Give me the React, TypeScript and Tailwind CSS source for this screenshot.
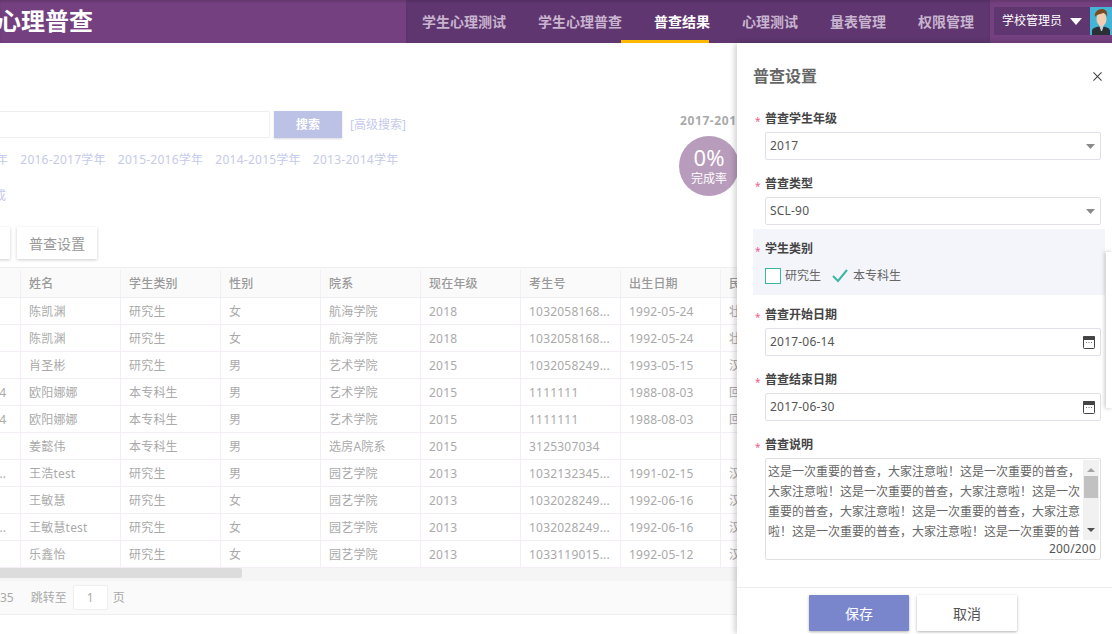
import type { ReactNode } from 'react';

const navItems = ['学生心理测试', '学生心理普查', '普查结果', '心理测试', '量表管理', '权限管理'];
const years = ['2016-2017学年', '2015-2016学年', '2014-2015学年', '2013-2014学年'];
const headers = ['', '姓名', '学生类别', '性别', '院系', '现在年级', '考生号', '出生日期', '民族'];
const rows = [
  ['', '陈凯渊', '研究生', '女', '航海学院', '2018', '1032058168...', '1992-05-24', '壮'],
  ['', '陈凯渊', '研究生', '女', '航海学院', '2018', '1032058168...', '1992-05-24', '壮'],
  ['', '肖圣彬', '研究生', '男', '艺术学院', '2015', '1032058249...', '1993-05-15', '汉'],
  ['4', '欧阳娜娜', '本专科生', '男', '艺术学院', '2015', '1111111', '1988-08-03', '回'],
  ['4', '欧阳娜娜', '本专科生', '男', '艺术学院', '2015', '1111111', '1988-08-03', '回'],
  ['', '姜懿伟', '本专科生', '男', '选房A院系', '2015', '3125307034', '', ''],
  ['...', '王浩test', '研究生', '男', '园艺学院', '2013', '1032132345...', '1991-02-15', '汉'],
  ['', '王敏慧', '研究生', '女', '园艺学院', '2013', '1032028249...', '1992-06-16', '汉'],
  ['...', '王敏慧test', '研究生', '女', '园艺学院', '2013', '1032028249...', '1992-06-16', '汉'],
  ['', '乐鑫怡', '研究生', '女', '园艺学院', '2013', '1033119015...', '1992-05-12', '汉'],
];
const notice = '这是一次重要的普查，大家注意啦！'.repeat(7);

function Avatar() {
  return (
    <svg viewBox="0 0 22 28" className="h-[28px] w-[22px] shrink-0">
      <rect width="22" height="28" fill="#42b4d8" />
      <path d="M2 28v-4c0-3 4-4 9-5 5 1 9 2 9 5v4z" fill="#2b3036" />
      <path d="M9 18h5l-2 6h-1z" fill="#c9ccd0" />
      <ellipse cx="11.5" cy="12" rx="5" ry="7" fill="#f2cdb0" />
      <path d="M5 10c-1-5 3-8 7-8 3 0 6 2 5 8-1-3-2-4-4-4-2 1-6 1-8 4z" fill="#7a4a22" />
    </svg>
  );
}

function Caret() {
  return (
    <svg viewBox="0 0 9 5" className="h-[5px] w-[9px]">
      <path d="M0 0h9L4.5 5z" fill="#8a8a8a" />
    </svg>
  );
}

function CalendarIcon() {
  return (
    <svg viewBox="0 0 12 13" className="h-[13px] w-[12px]">
      <rect x=".5" y=".5" width="11" height="12" rx="1" fill="#fff" stroke="#444" />
      <rect x="0" y="0" width="12" height="4" rx="1" fill="#444" />
      <path d="M3 6.5h1M5.5 6.5h1M8 6.5h1" stroke="#777" />
    </svg>
  );
}

function Field({ label, children }: { label: string; children: ReactNode }) {
  return (
    <div className="flex flex-col">
      <div className="flex h-[18px] items-center">
        <span className="w-[12px] pl-[2px] pt-[3px] text-[10px] leading-none text-[#ec5f8c]">*</span>
        <span className="text-[12px] font-bold text-[#444]">{label}</span>
      </div>
      {children}
    </div>
  );
}

function InputBox({ value, icon }: { value: string; icon: ReactNode }) {
  return (
    <div className="ml-[12px] mt-[4px] flex h-[28px] w-[336px] items-center justify-between rounded-[2px] border border-[#e3dfe8] bg-white pl-[4px] pr-[5px] text-[12px] tracking-[0.2px] text-[#555]">
      <span>{value}</span>
      {icon}
    </div>
  );
}

function DataTable() {
  return (
    <div className="h-[301px] w-[920px] overflow-hidden border-t border-[#f0eef2]">
      {[headers, ...rows].map((row, i) => (
        <div
          key={i}
          className={
            i === 0
              ? 'flex h-[30px] border-b border-[#f0eef2] bg-[#fafafa] pt-[2px] text-[12px] font-medium text-[#999]'
              : 'flex h-[27px] border-b border-[#f2eef4] text-[12px] text-[#aaa]'
          }
        >
          {row.map((cell, j) => (
            <div
              key={j}
              className={
                j === 0
                  ? 'flex w-[20px] shrink-0 items-center justify-end pr-[14px] pt-[1px]'
                  : 'flex w-[100px] shrink-0 items-center border-l border-[#f2eef4] pl-[8px] pt-[1px] tracking-[0.2px] whitespace-nowrap'
              }
            >
              {cell}
            </div>
          ))}
        </div>
      ))}
    </div>
  );
}

function Drawer() {
  return (
    <aside className="absolute bottom-0 right-0 top-[43px] flex w-[375px] flex-col bg-white shadow-[-2px_0_6px_rgba(0,0,0,0.2)]">
      <div className="flex h-[67px] shrink-0 items-center justify-between pb-[2px] pl-[16px] pr-[10px]">
        <span className="text-[16px] font-bold text-[#666]">普查设置</span>
        <svg viewBox="0 0 10 10" className="mt-[2px] h-[9px] w-[9px]">
          <path d="M.5.5l9 9M9.5.5l-9 9" stroke="#444" strokeWidth="1.2" />
        </svg>
      </div>
      <div className="flex flex-1 flex-col px-[16px]">
        <Field label="普查学生年级">
          <InputBox value="2017" icon={<Caret />} />
        </Field>
        <div className="mt-[15px]">
          <Field label="普查类型">
            <InputBox value="SCL-90" icon={<Caret />} />
          </Field>
        </div>
        <div className="mt-[4px] h-[66px] w-[352px] bg-[#f4f5fa] pt-[11px]">
          <Field label="学生类别">
            <div className="ml-[12px] mt-[7px] flex h-[22px] items-center text-[12px] text-[#666]">
              <span className="h-[16px] w-[16px] border border-[#3db5a6] bg-white" />
              <span className="ml-[4px]">研究生</span>
              <svg viewBox="0 0 16 14" className="ml-[11px] h-[14px] w-[16px]">
                <path d="M1 7l5 5 9-11" fill="none" stroke="#3db5a6" strokeWidth="2" />
              </svg>
              <span className="ml-[5px]">本专科生</span>
            </div>
          </Field>
        </div>
        <div className="mt-[11px]">
          <Field label="普查开始日期">
            <InputBox value="2017-06-14" icon={<CalendarIcon />} />
          </Field>
        </div>
        <div className="mt-[15px]">
          <Field label="普查结束日期">
            <InputBox value="2017-06-30" icon={<CalendarIcon />} />
          </Field>
        </div>
        <div className="mt-[15px]">
          <Field label="普查说明">
            <div className="relative ml-[12px] mt-[4px] h-[102px] w-[336px] rounded-[2px] border border-[#e0e0e0] bg-white pl-[2px] pt-[3px] text-[12px] leading-[20px] text-[#666]">
              <div className="h-[80px] w-[312px] overflow-hidden">{notice}</div>
              <div className="pr-[4px] text-right leading-[14px] tracking-[0.2px] text-[#555]">200/200</div>
              <div className="absolute right-[1px] top-[1px] flex h-[80px] w-[16px] flex-col items-center bg-[#f1f1f1]">
                <svg viewBox="0 0 8 4" className="mt-[8px] h-[4px] w-[8px]">
                  <path d="M0 4h8L4 0z" fill="#a3a3a3" />
                </svg>
                <div className="mt-[4px] h-[22px] w-[14px] bg-[#c1c1c1]" />
                <svg viewBox="0 0 8 4" className="mb-[8px] mt-auto h-[4px] w-[8px]">
                  <path d="M0 0h8L4 4z" fill="#505050" />
                </svg>
              </div>
            </div>
          </Field>
        </div>
      </div>
      <div className="flex h-[47px] shrink-0 items-start gap-[8px] border-t border-[#eee] pl-[72px] pt-[7px]">
        <button className="h-[36px] w-[100px] rounded-[1px] bg-[#7986cb] text-[14px] text-white shadow-[0_1px_3px_rgba(0,0,0,0.3)]">
          保存
        </button>
        <button className="h-[36px] w-[100px] rounded-[1px] bg-white text-[14px] text-[#555] shadow-[0_1px_3px_rgba(0,0,0,0.3)]">
          取消
        </button>
      </div>
      {/* stray floating panel peeking out at the window edge */}
      <div className="absolute right-0 top-[209px] h-[156px] w-[6px] bg-white shadow-[-1px_0_4px_rgba(0,0,0,0.25)]" />
    </aside>
  );
}

export default function App() {
  return (
    <div className="relative h-[634px] w-[1112px] overflow-hidden bg-white font-['Noto_Sans','Noto_Sans_CJK_SC',sans-serif]">
      <header className="flex h-[43px] items-stretch bg-[#74407f] shadow-[inset_0_2px_2px_rgba(0,0,0,0.12)]">
        <div className="-ml-[3px] flex w-[409px] items-center pb-[1px] text-[24px] font-bold whitespace-nowrap text-white">心理普查</div>
        <nav className="relative flex w-[584px] bg-[#5f3670] shadow-[inset_0_2px_2px_rgba(0,0,0,0.1)]">
          {navItems.map((item, i) => (
            <a
              key={item}
              className={
                i === 2
                  ? 'flex items-center px-[16px] text-[14px] font-bold whitespace-nowrap text-white'
                  : 'flex items-center px-[16px] text-[14px] font-bold whitespace-nowrap text-[#c8b4ce]'
              }
            >
              {item}
            </a>
          ))}
          <span className="absolute bottom-0 left-[215px] h-[3px] w-[88px] bg-[#ffb900]" />
        </nav>
        <div className="ml-[4px] mt-[7px] flex h-[28px] w-[96px] items-center bg-[#5f3670] pl-[8px] text-[12px] text-white">
          学校管理员
          <svg viewBox="0 0 12 7" className="ml-[8px] h-[7px] w-[12px]">
            <path d="M0 0h12L6 7z" fill="#fff" />
          </svg>
        </div>
        <div className="mt-[7px]">
          <Avatar />
        </div>
      </header>

      <main>
        <section className="flex h-[224px]">
          <div className="w-[679px] pt-[68px]">
            <div className="flex items-center">
              <div className="h-[27px] w-[270px] rounded-r-[2px] border border-l-0 border-[#eee]" />
              <button className="ml-[4px] h-[27px] w-[68px] bg-[#bcc2e5] pt-[1px] text-[12px] font-bold text-white shadow-[0_1px_2px_rgba(0,0,0,0.15)]">
                搜索
              </button>
              <a className="ml-[8px] text-[12px] text-[#c5cae9]">[高级搜索]</a>
            </div>
            <div className="-ml-[4px] mt-[13px] flex gap-[12px] text-[12px] leading-[18px] tracking-[0.25px] whitespace-nowrap text-[#c5cae9]">
              <span>年</span>
              {years.map((y) => (
                <a key={y}>{y}</a>
              ))}
            </div>
            <div className="-ml-[6px] mt-[18px] text-[12px] leading-[18px] text-[#c5cae9]">成</div>
            <div className="mt-[22px] flex gap-[7px]">
              <button className="-ml-[40px] h-[32px] w-[50px] bg-white shadow-[0_1px_3px_rgba(0,0,0,0.2)]" />
              <button className="h-[32px] w-[80px] bg-white text-[14px] text-[#999] shadow-[0_1px_3px_rgba(0,0,0,0.2)]">
                普查设置
              </button>
            </div>
          </div>
          <div className="w-[60px] pt-[68px]">
            <div className="pl-[1px] text-[12px] font-bold leading-[20px] tracking-[0.6px] whitespace-nowrap text-[#aaa]">
              2017-2018学年
            </div>
            <div className="mt-[5px] flex h-[60px] w-[60px] flex-col items-center justify-center rounded-full bg-[#b89cbc] text-white">
              <span className="mb-[2px] text-[22px] leading-[24px]">0%</span>
              <span className="text-[12px] leading-[16px]">完成率</span>
            </div>
          </div>
        </section>
        <DataTable />
        <div className="h-[13px] bg-[#f5f5f5]">
          <div className="h-[10px] w-[242px] rounded-r-[2px] bg-[#dcdcdc]" />
        </div>
        <div className="flex h-[34px] items-center border-b border-[#f0eef2] bg-[#fafafa] text-[12px] text-[#aaa]">
          <span>35</span>
          <span className="ml-[17px]">跳转至</span>
          <span className="ml-[6px] flex h-[25px] w-[35px] items-center justify-center rounded-[2px] border border-[#eee] bg-white">1</span>
          <span className="ml-[5px]">页</span>
        </div>
      </main>

      <Drawer />
    </div>
  );
}
